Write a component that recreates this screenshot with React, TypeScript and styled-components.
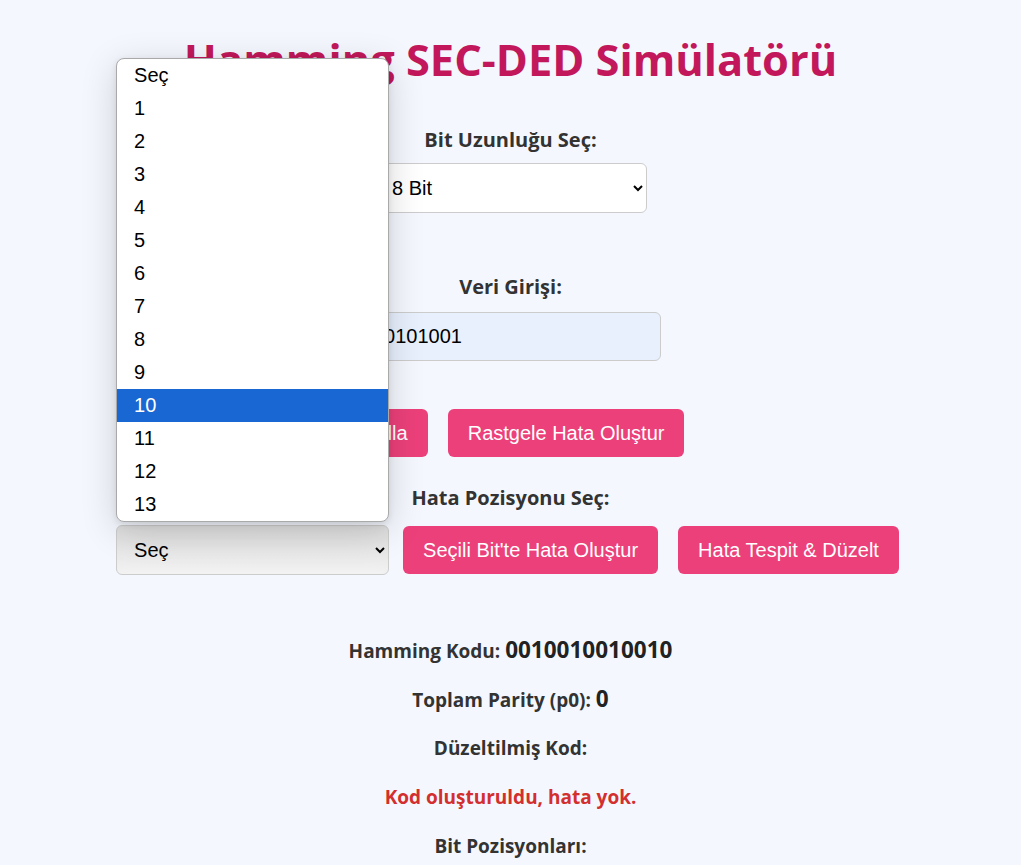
import React from 'react'
import styled, { createGlobalStyle, css } from 'styled-components'

const GlobalStyle = createGlobalStyle`
  html, body {
    margin: 0;
    padding: 0;
    background: #f4f8fe;
    overflow: hidden;
  }
  body {
    font-family: 'Open Sans', 'Liberation Sans', sans-serif;
    color: #333;
  }
`

const Page = styled.main`
  display: flex;
  flex-direction: column;
  align-items: center;
  padding-top: 33px;
  min-height: 865px;
  box-sizing: border-box;
`

const Title = styled.h1`
  margin: 0 0 41px;
  font-size: 43.4px;
  line-height: 54px;
  font-weight: 700;
  color: #c2185b;
`

const Label = styled.div<{ $gap: number }>(
  props => css`
    font-weight: 700;
    font-size: 20px;
    line-height: 24px;
    color: #333;
    margin-bottom: ${props.$gap}px;
  `
)

const fieldBase = css`
  box-sizing: border-box;
  font-family: 'Liberation Sans', Arial, sans-serif;
  font-size: 20px;
  color: #000;
  border: 1px solid #ccc;
  border-radius: 6px;
  padding: 0 12px;
  outline: none;
`

const Select = styled.select<{ $open?: boolean; $width: number }>(
  props => css`
    ${fieldBase};
    width: ${props.$width}px;
    height: 50px;
    padding-left: 13px;
    background: ${props.$open ? 'linear-gradient(#dcdcdc, #f2f2f2)' : '#fff'};
  `
)

const Input = styled.input`
  ${fieldBase};
  width: 301px;
  height: 49px;
  background: #e8f0fe;
`

const Row = styled.div<{ $gap: number }>(
  props => css`
    display: flex;
    align-items: center;
    justify-content: center;
    margin-bottom: ${props.$gap}px;
  `
)

const Spacer = styled.div<{ $h: number }>(
  props => css`
    height: ${props.$h}px;
  `
)

const Button = styled.button`
  margin: 0 10px;
  padding: 12px 20px;
  line-height: 24px;
  font-family: 'Liberation Sans', Arial, sans-serif;
  font-size: 20px;
  color: #fff;
  background: #ec407a;
  border: none;
  border-radius: 6px;
  cursor: pointer;
`

const SelectWrap = styled.div`
  position: relative;
  margin: 0 4px;
  display: flex;
`

const Popup = styled.ul`
  position: absolute;
  left: 0;
  right: 0;
  bottom: calc(100% + 3px);
  margin: 0;
  padding: 0;
  list-style: none;
  background: #fff;
  border: 1px solid #a9a9a9;
  border-radius: 8px;
  overflow: hidden;
  box-shadow: 0 8px 36px rgba(0, 0, 0, 0.16), 0 2px 6px rgba(0, 0, 0, 0.1);
  z-index: 10;
`

const Option = styled.li<{ $active?: boolean }>(
  props => css`
    height: 33px;
    line-height: 33px;
    padding-left: 17px;
    font-family: 'Liberation Sans', Arial, sans-serif;
    font-size: 20px;
    color: ${props.$active ? '#fff' : '#000'};
    background: ${props.$active ? '#1967d2' : 'transparent'};
  `
)

const Results = styled.section`
  display: flex;
  flex-direction: column;
  align-items: center;
  gap: 21px;
  margin-top: 61px;
`

const Line = styled.p<{ $error?: boolean }>(
  props => css`
    margin: 0;
    height: 28px;
    line-height: 28px;
    font-size: 19px;
    font-weight: 700;
    color: ${props.$error ? '#d32f2f' : '#333'};
  `
)

const Value = styled.span`
  font-size: 22.5px;
  line-height: 28px;
  color: #222;
`

const positions = ['Seç', ...Array.from({ length: 13 }, (_, i) => String(i + 1))]

export default function App() {
  return (
    <>
      <GlobalStyle />
      <Page>
        <Title>Hamming SEC-DED Simülatörü</Title>

        <Label $gap={11}>Bit Uzunluğu Seç:</Label>
        <Select $width={273} defaultValue="8">
          <option value="8">8 Bit</option>
          <option value="16">16 Bit</option>
          <option value="32">32 Bit</option>
        </Select>
        <Spacer $h={62} />

        <Label $gap={13}>Veri Girişi:</Label>
        <Input defaultValue="10101001" />
        <Spacer $h={48} />

        <Row $gap={29}>
          <Button>Kodla</Button>
          <Button>Rastgele Hata Oluştur</Button>
        </Row>

        <Label $gap={15}>Hata Pozisyonu Seç:</Label>
        <Row $gap={0}>
          <SelectWrap>
            <Select $width={273} $open defaultValue="">
              {positions.map(p => (
                <option key={p} value={p === 'Seç' ? '' : p}>
                  {p}
                </option>
              ))}
            </Select>
            <Popup>
              {positions.map(p => (
                <Option key={p} $active={p === '10'}>
                  {p}
                </Option>
              ))}
            </Popup>
          </SelectWrap>
          <Button>Seçili Bit'te Hata Oluştur</Button>
          <Button>Hata Tespit &amp; Düzelt</Button>
        </Row>

        <Results>
          <Line>
            Hamming Kodu: <Value>0010010010010</Value>
          </Line>
          <Line>
            Toplam Parity (p0): <Value>0</Value>
          </Line>
          <Line>Düzeltilmiş Kod:</Line>
          <Line $error>Kod oluşturuldu, hata yok.</Line>
          <Line>Bit Pozisyonları:</Line>
        </Results>
      </Page>
    </>
  )
}
